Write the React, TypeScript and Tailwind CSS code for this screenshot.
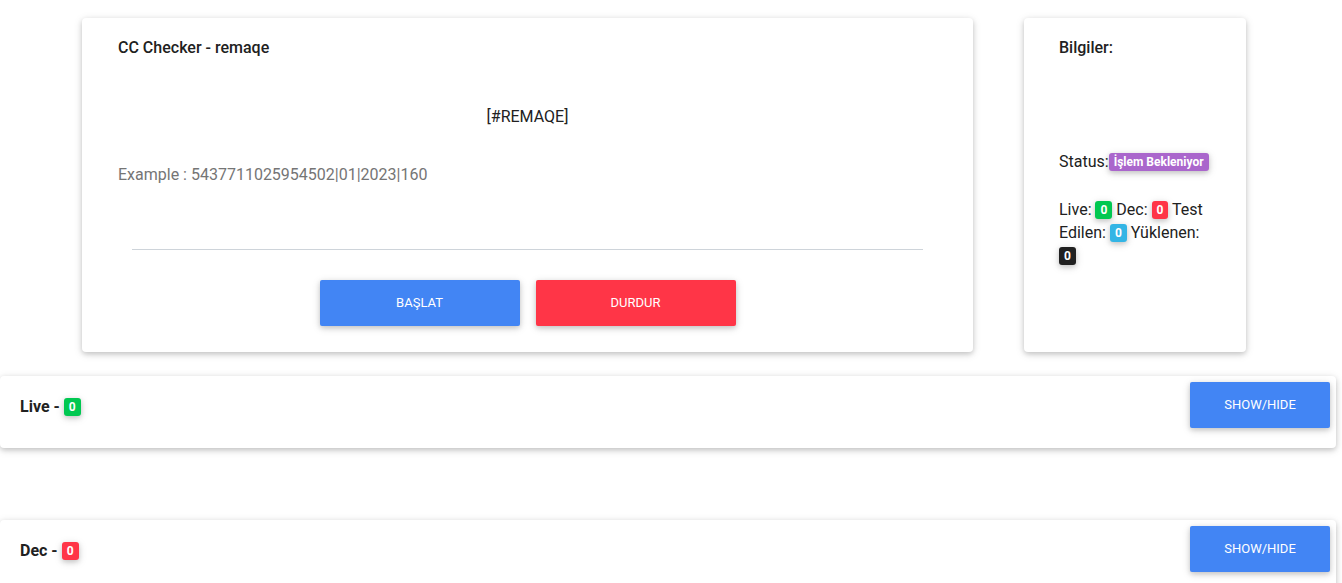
import React from "react";

const cardShadow =
  "shadow-[0_2px_5px_0_rgba(0,0,0,0.16),0_2px_10px_0_rgba(0,0,0,0.12)]";

function Badge({ color, children }: { color: string; children: React.ReactNode }) {
  return (
    <span
      className={`${color} inline-block rounded-[3px] px-[5px] py-[2px] text-[12px] font-bold leading-[14px] text-white align-[1px] shadow-[0_2px_5px_0_rgba(0,0,0,0.16),0_2px_10px_0_rgba(0,0,0,0.12)]`}
    >
      {children}
    </span>
  );
}

function ResultPanel({ title, count, color }: { title: string; count: number; color: string }) {
  return (
    <div className={`flex h-[72px] w-[1336px] items-start justify-between rounded-[4px] bg-white ${cardShadow}`}>
      <div className="pl-[20px] pt-[20px] text-[16px] font-bold leading-[22px] text-[#212121]">
        {title} - <Badge color={color}>{count}</Badge>
      </div>
      <button
        className={`mr-[6px] mt-[6px] h-[46px] w-[140px] rounded-[2px] bg-[#4285f4] text-[13px] uppercase text-white ${cardShadow}`}
      >
        Show/Hide
      </button>
    </div>
  );
}

export default function App() {
  return (
    <div className="min-h-screen bg-white font-['Roboto',sans-serif] text-[#212121]">
      <div className="flex gap-[51px] pl-[82px] pt-[18px]">
        <div className={`h-[334px] w-[891px] rounded-[4px] bg-white px-[36px] pt-[19px] ${cardShadow}`}>
          <h5 className="text-[16px] font-medium leading-[22px]">CC Checker - remaqe</h5>
          <p className="mt-[47px] text-center text-[16px] leading-[22px]">[#REMAQE]</p>
          <p className="mt-[36px] text-[16px] leading-[22px] text-[#757575]">
            Example : 5437711025954502|01|2023|160
          </p>
          <div className="mx-[14px] mt-[63px] border-b border-[#ced4da]" />
          <div className="mt-[30px] flex justify-center gap-[16px]">
            <button
              className={`h-[46px] w-[200px] rounded-[2px] bg-[#4285f4] text-[13px] uppercase text-white ${cardShadow}`}
            >
              BAŞLAT
            </button>
            <button
              className={`h-[46px] w-[200px] rounded-[2px] bg-[#ff3547] text-[13px] uppercase text-white ${cardShadow}`}
            >
              DURDUR
            </button>
          </div>
        </div>

        <div className={`h-[334px] w-[222px] rounded-[4px] bg-white px-[35px] pt-[19px] ${cardShadow}`}>
          <h5 className="text-[16px] font-medium leading-[22px]">Bilgiler:</h5>
          <p className="mt-[92px] text-[16px] leading-[22px]">
            Status:<Badge color="bg-[#aa66cc]">İşlem Bekleniyor</Badge>
          </p>
          <p className="mt-[25px] text-[16px] leading-[23px]">
            Live: <Badge color="bg-[#00c851]">0</Badge> Dec: <Badge color="bg-[#ff3547]">0</Badge> Test
            Edilen: <Badge color="bg-[#33b5e5]">0</Badge> Yüklenen: <Badge color="bg-[#212121]">0</Badge>
          </p>
        </div>
      </div>

      <div className="mt-[24px]">
        <ResultPanel title="Live" count={0} color="bg-[#00c851]" />
      </div>
      <div className="mt-[72px]">
        <ResultPanel title="Dec" count={0} color="bg-[#ff3547]" />
      </div>
    </div>
  );
}
